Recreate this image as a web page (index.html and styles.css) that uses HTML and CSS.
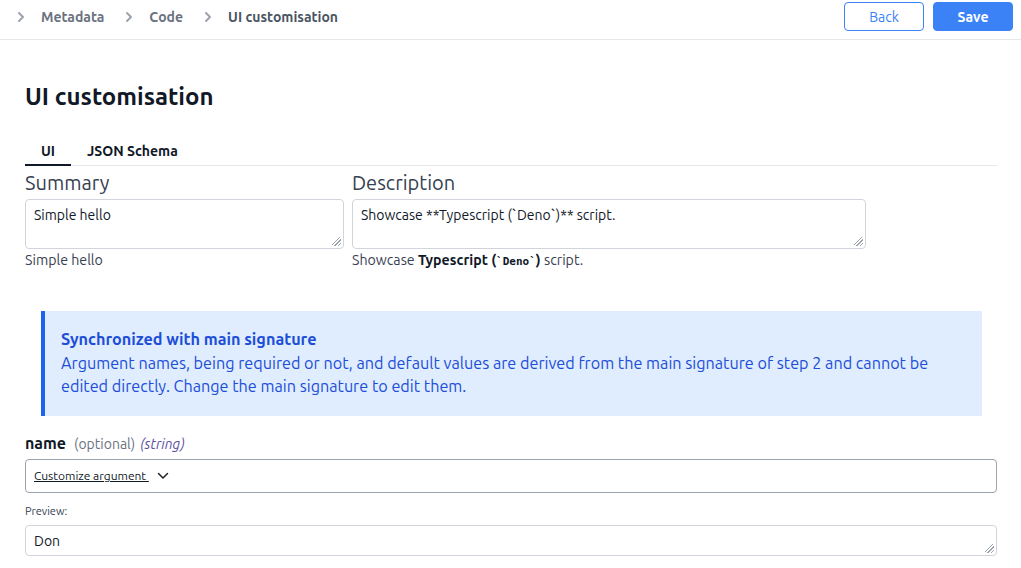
FILE: index.html
```html
<!DOCTYPE html>
<html>
<head>
<meta charset="utf-8">
<link rel="stylesheet" href="styles.css">
</head>
<body>
<div class="page">
  <header class="topbar">
    <nav class="crumbs">
      <span class="chev"><svg width="10" height="12" viewBox="0 0 10 12"><path d="M3 2l4 4-4 4" fill="none" stroke="currentColor" stroke-width="2" stroke-linecap="round" stroke-linejoin="round"/></svg></span>
      <span class="crumb">Metadata</span>
      <span class="chev"><svg width="10" height="12" viewBox="0 0 10 12"><path d="M3 2l4 4-4 4" fill="none" stroke="currentColor" stroke-width="2" stroke-linecap="round" stroke-linejoin="round"/></svg></span>
      <span class="crumb">Code</span>
      <span class="chev"><svg width="10" height="12" viewBox="0 0 10 12"><path d="M3 2l4 4-4 4" fill="none" stroke="currentColor" stroke-width="2" stroke-linecap="round" stroke-linejoin="round"/></svg></span>
      <span class="crumb current">UI customisation</span>
    </nav>
    <div class="actions">
      <button class="btn btn-outline">Back</button>
      <button class="btn btn-primary">Save</button>
    </div>
  </header>

  <main class="content">
    <h1 class="title">UI customisation</h1>
    <div class="tabs">
      <div class="tab active">UI</div>
      <div class="tab">JSON Schema</div>
    </div>

    <div class="meta-row">
      <div class="field summary">
        <label class="big-label">Summary</label>
        <div class="textarea">Simple hello<span class="grip"></span></div>
        <div class="rendered">Simple hello</div>
      </div>
      <div class="field description">
        <label class="big-label">Description</label>
        <div class="textarea">Showcase **Typescript (`Deno`)** script.<span class="grip"></span></div>
        <div class="rendered">Showcase <strong>Typescript (<code>`Deno`</code>)</strong> script.</div>
      </div>
    </div>

    <div class="alert">
      <div class="alert-title">Synchronized with main signature</div>
      <div class="alert-body">Argument names, being required or not, and default values are derived from the main signature of step 2 and cannot be edited directly. Change the main signature to edit them.</div>
    </div>

    <div class="arg">
      <div class="arg-head"><span class="arg-name">name</span><span class="arg-opt">(optional)</span><span class="arg-type">(string)</span></div>
      <div class="customize">
        <span class="customize-link">Customize argument </span>
        <svg class="down" width="12" height="8" viewBox="0 0 12 8"><path d="M1.5 1.5l4.5 4.5 4.5-4.5" fill="none" stroke="#222" stroke-width="1.5" stroke-linecap="round" stroke-linejoin="round"/></svg>
      </div>
      <div class="preview-label">Preview:</div>
      <div class="textarea preview">Don<span class="grip"></span></div>
    </div>
  </main>
</div>
</body>
</html>
```

FILE: styles.css
```css
* { box-sizing: border-box; }
html, body { margin: 0; padding: 0; background: #fff; }
body {
  font-family: Ubuntu, Lato, "Noto Sans", sans-serif;
  color: #111827;
  overflow: hidden;
}
.page { width: 1021px; height: 568px; }

.topbar {
  height: 40px;
  display: flex;
  align-items: flex-start;
  justify-content: space-between;
  border-bottom: 1px solid #e5e7eb;
  padding: 2px 8px 0 14px;
}
.crumbs {
  display: flex;
  align-items: center;
  height: 30px;
  font-size: 14px;
  font-weight: 600;
  color: #6b7280;
}
.chev { display: flex; align-items: center; color: #9ca3af; width: 12px; margin-right: 15px; padding-left: 2px; }
.crumb { margin-right: 18px; }
.crumb.current { color: #4b5563; font-weight: 700; }

.actions { display: flex; gap: 9px; }
.btn {
  width: 80px;
  height: 29px;
  border-radius: 4px;
  font-family: inherit;
  font-size: 14px;
  cursor: pointer;
  padding: 1px 0 0;
}
.btn-outline { background: #fff; border: 1px solid #3b82f6; color: #3b82f6; }
.btn-primary { background: #3b82f6; border: 1px solid #3b82f6; color: #fff; font-weight: 700; }

.content { padding: 0 24px 0 25px; }
.title {
  margin: 43px 0 0;
  font-size: 24px;
  line-height: 28px;
  font-weight: 700;
  color: #111827;
}
.tabs {
  margin-top: 28px;
  display: flex;
  border-bottom: 1px solid #e5e7eb;
}
.tab {
  font-size: 14px;
  font-weight: 700;
  color: #111827;
  padding: 4px 16px 4px;
  line-height: 17px;
  border-bottom: 2px solid transparent;
  margin-bottom: -1px;
}
.tab.active { border-bottom-color: #111827; }

.meta-row { display: flex; gap: 8px; }
.field.summary { width: 319px; }
.field.description { width: 514px; }
.big-label {
  display: block;
  font-size: 20px;
  line-height: 33px;
  font-weight: 400;
  color: #374151;
}
.textarea {
  position: relative;
  border: 1px solid #d1d5db;
  border-radius: 4px;
  height: 50px;
  padding: 7px 8px;
  font-size: 14px;
  line-height: 17px;
  color: #111827;
}
.grip {
  position: absolute;
  right: 2px;
  bottom: 2px;
  width: 9px;
  height: 9px;
  background: linear-gradient(135deg, transparent 0 40%, #9ca3af 40% 47%, transparent 47% 60%, #9ca3af 60% 67%, transparent 67% 80%, #9ca3af 80% 87%, transparent 87%);
}
.rendered {
  font-size: 14.2px;
  line-height: 20px;
  color: #374151;
  margin-top: 1px;
}
.rendered strong { color: #111827; }
.rendered code { font-family: "DejaVu Sans Mono", monospace; font-size: 11px; font-weight: 700; }

.alert {
  margin: 39px 15px 0 16px;
  background: #dfedfe;
  border-left: 4px solid #1d63ed;
  padding: 17px 16px 17px 16px;
  color: #1d4ed8;
  font-size: 16.2px;
  line-height: 23.5px;
}
.alert-title { font-weight: 700; }

.arg { margin-top: 16px; }
.arg-head { display: flex; align-items: baseline; gap: 7px; line-height: 22px; }
.arg-name { font-size: 16px; font-weight: 700; color: #111827; margin-right: 1px; }
.arg-opt { font-size: 14px; color: #6b7280; }
.arg-type { font-size: 14px; color: #5b4ea0; font-style: italic; margin-left: -2px; }
.customize {
  margin-top: 4px;
  height: 34px;
  border: 1px solid #9ca3af;
  border-radius: 4px;
  display: flex;
  align-items: center;
  padding: 0 8px;
  gap: 8px;
  font-size: 12px;
  color: #111827;
}
.customize-link { text-decoration: underline; white-space: pre; }
.preview-label { font-size: 11px; color: #374151; margin-top: 11px; line-height: 14px; }
.textarea.preview { margin-top: 7px; height: 31px; padding: 7px 8px; }
```
